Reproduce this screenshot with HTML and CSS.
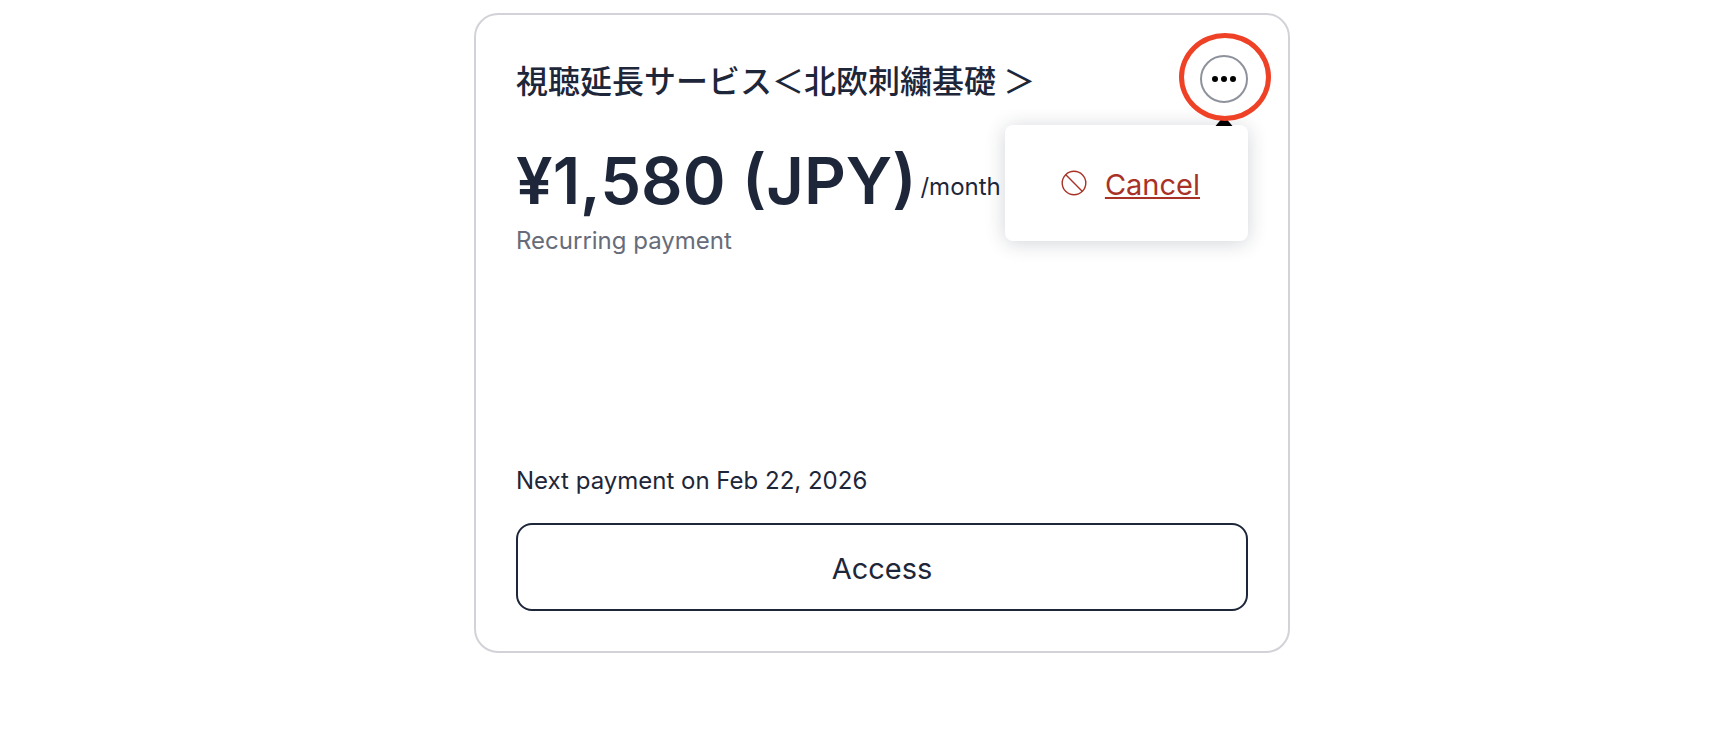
FILE: index.html
```html
<!DOCTYPE html>
<html lang="ja">
<head>
    <meta charset="UTF-8">
    <meta name="viewport" content="width=device-width, initial-scale=1.0">
    <title>Subscription</title>
    <link rel="stylesheet" href="styles.css">
</head>
<body>
    <main class="card">
        <header class="card-header">
            <h1 class="title">視聴延長サービス＜北欧刺繍基礎 ＞</h1>
            <div class="menu">
                <button class="menu-btn" type="button" aria-label="Options" aria-expanded="true">
                    <svg width="24" height="8" viewBox="0 0 24 8">
                        <circle cx="3" cy="4" r="3"/>
                        <circle cx="12" cy="4" r="3"/>
                        <circle cx="21" cy="4" r="3"/>
                    </svg>
                </button>
                <div class="dropdown">
                    <svg class="cancel-icon" width="26" height="26" viewBox="0 0 26 26">
                        <circle cx="13" cy="13" r="11.8"/>
                        <path d="M4.6 4.6L21.4 21.4"/>
                    </svg>
                    <a class="cancel-link" href="#">Cancel</a>
                </div>
                <svg class="arrow" width="24" height="12" viewBox="0 0 24 12">
                    <path d="M12 2L20.5 12H3.5Z"/>
                </svg>
                <span class="marker"></span>
            </div>
        </header>

        <div class="price-row">
            <span class="price">¥1,580 (JPY)</span>
            <span class="period">/month</span>
        </div>
        <p class="note">Recurring payment</p>

        <p class="next-payment">Next payment on Feb 22, 2026</p>
        <button class="access-btn" type="button">Access</button>
    </main>
</body>
</html>
```
FILE: styles.css
```css
* {
    box-sizing: border-box;
}

body {
    margin: 0;
    padding: 13px 0 24px 50px;
    background-color: #fff;
    color: #1e263a;
    font-family: Inter, "Noto Sans CJK JP", sans-serif;
    font-size: 24px;
    line-height: 36px;
}

.card {
    display: flex;
    flex-direction: column;
    max-width: 816px;
    margin: 0 auto;
    padding: 40px;
    border: 2px solid #d2d2d8;
    border-radius: 24px;
}

.card-header {
    display: flex;
    justify-content: space-between;
    align-items: center;
    margin-bottom: 36px;
}

.title {
    margin: 0;
    font-family: "Noto Sans CJK JP", sans-serif;
    font-size: 32px;
    font-weight: 500;
    line-height: 48px;
}

.menu {
    position: relative;
}

.menu-btn {
    display: flex;
    justify-content: center;
    align-items: center;
    width: 48px;
    height: 48px;
    padding: 0;
    border: 2px solid #8e929c;
    border-radius: 50%;
    background-color: #fff;
    cursor: pointer;
}

.dropdown {
    position: absolute;
    top: 70px;
    right: 0;
    display: flex;
    align-items: center;
    gap: 18px;
    padding: 40px 48px 40px 56px;
    border-radius: 8px;
    background-color: #fff;
    box-shadow: 0 2px 20px rgba(30, 38, 58, 0.2);
}

.cancel-icon {
    fill: none;
    stroke: #a93226;
    stroke-width: 1.4;
}

.cancel-link {
    padding-top: 4px;
    color: #a93226;
    font-size: 29px;
    line-height: 32px;
    text-decoration-thickness: 2px;
    text-underline-offset: 2px;
}

.arrow {
    position: absolute;
    top: 59px;
    right: 12px;
}

/* red ring around the options button */
.marker {
    position: absolute;
    top: -22px;
    right: -23px;
    width: 92px;
    height: 88px;
    border: 5px solid #ee4126;
    border-radius: 50%;
    pointer-events: none;
}

.price-row {
    display: flex;
    align-items: center;
    gap: 4px;
}

.price {
    font-size: 65px;
    font-weight: 600;
    line-height: 84px;
}

.period {
    padding-top: 12px;
}

.note {
    margin: 0;
    color: #666c79;
}

.next-payment {
    margin: 204px 0 24px;
}

.access-btn {
    width: 100%;
    padding: 26px 24px 22px;
    border: 2px solid #1e263a;
    border-radius: 16px;
    background-color: #fff;
    color: #1e263a;
    font-family: inherit;
    font-size: 29px;
    line-height: 36px;
    cursor: pointer;
}
```
